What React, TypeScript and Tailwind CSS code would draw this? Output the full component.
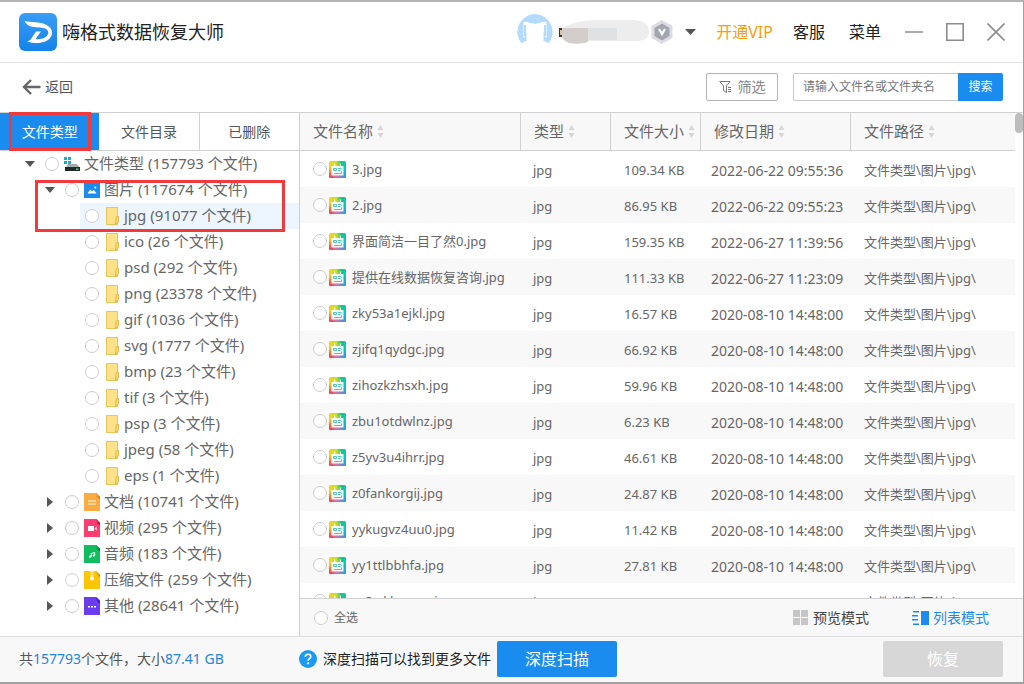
import { useState } from "react";
import type { ReactNode } from "react";

type FileKind = "drive" | "image" | "folder" | "doc" | "video" | "audio" | "zip" | "other";

interface TreeNode {
  name: string;
  count: number;
  kind: FileKind;
  level: number;
  open?: boolean;
}

const treeNodes: TreeNode[] = [
  { name: "文件类型", count: 157793, kind: "drive", level: 0, open: true },
  { name: "图片", count: 117674, kind: "image", level: 1, open: true },
  { name: "jpg", count: 91077, kind: "folder", level: 2 },
  { name: "ico", count: 26, kind: "folder", level: 2 },
  { name: "psd", count: 292, kind: "folder", level: 2 },
  { name: "png", count: 23378, kind: "folder", level: 2 },
  { name: "gif", count: 1036, kind: "folder", level: 2 },
  { name: "svg", count: 1777, kind: "folder", level: 2 },
  { name: "bmp", count: 23, kind: "folder", level: 2 },
  { name: "tif", count: 3, kind: "folder", level: 2 },
  { name: "psp", count: 3, kind: "folder", level: 2 },
  { name: "jpeg", count: 58, kind: "folder", level: 2 },
  { name: "eps", count: 1, kind: "folder", level: 2 },
  { name: "文档", count: 10741, kind: "doc", level: 1 },
  { name: "视频", count: 295, kind: "video", level: 1 },
  { name: "音频", count: 183, kind: "audio", level: 1 },
  { name: "压缩文件", count: 259, kind: "zip", level: 1 },
  { name: "其他", count: 28641, kind: "other", level: 1 },
];

const files = [
  { name: "3.jpg", size: "109.34 KB", date: "2022-06-22 09:55:36" },
  { name: "2.jpg", size: "86.95 KB", date: "2022-06-22 09:55:23" },
  { name: "界面简洁一目了然0.jpg", size: "159.35 KB", date: "2022-06-27 11:39:56" },
  { name: "提供在线数据恢复咨询.jpg", size: "111.33 KB", date: "2022-06-27 11:23:09" },
  { name: "zky53a1ejkl.jpg", size: "16.57 KB", date: "2020-08-10 14:48:00" },
  { name: "zjifq1qydgc.jpg", size: "66.92 KB", date: "2020-08-10 14:48:00" },
  { name: "zihozkzhsxh.jpg", size: "59.96 KB", date: "2020-08-10 14:48:00" },
  { name: "zbu1otdwlnz.jpg", size: "6.23 KB", date: "2020-08-10 14:48:00" },
  { name: "z5yv3u4ihrr.jpg", size: "46.61 KB", date: "2020-08-10 14:48:00" },
  { name: "z0fankorgij.jpg", size: "24.87 KB", date: "2020-08-10 14:48:00" },
  { name: "yykugvz4uu0.jpg", size: "11.42 KB", date: "2020-08-10 14:48:00" },
  { name: "yy1ttlbbhfa.jpg", size: "27.81 KB", date: "2020-08-10 14:48:00" },
  { name: "yx3wkhsumc.jpg", size: "18.06 KB", date: "2020-08-10 14:48:00" },
];

const columns = ["文件名称", "类型", "文件大小", "修改日期", "文件路径"];

const indent: Record<number, string> = {
  0: "pl-6",
  1: "pl-11",
  2: "pl-16",
};

function Circle({ id }: { id: string }) {
  return (
    <input
      id={id}
      type="checkbox"
      className="size-3.5 shrink-0 appearance-none rounded-full border border-[#cccccc] bg-white checked:bg-[#1a8cf0]"
    />
  );
}

function SheetIcon({ color, fold, children }: { color: string; fold: string; children: ReactNode }) {
  return (
    <svg width="16" height="18" viewBox="0 0 16 18">
      <path d="M0 0h12.5L16 3.5V18H0z" fill={color} />
      <path d="M12.5 0v3.5H16z" fill={fold} opacity="0.35" />
      <path d="M12.5 3.5H16v3z" fill={fold} />
      {children}
    </svg>
  );
}

function KindIcon({ kind }: { kind: FileKind }) {
  switch (kind) {
    case "drive":
      return (
        <svg width="16" height="16" viewBox="0 0 16 16">
          <path d="M0 1h3v3H0zM4 1h3v3H4zM0 5h3v3H0zM4 5h3v3H4z" fill="#1fa9c4" />
          <path d="M4 8h9l2 3H2z" fill="#a4adb0" />
          <path d="M1 11h15v4H1z" fill="#23282b" />
          <path d="M12 12.500h2.500V14H12z" fill="#36d67e" />
        </svg>
      );
    case "image":
      return (
        <svg width="16" height="16" viewBox="0 0 16 16">
          <path d="M0 0h16v16H0z" fill="#1a8cf0" />
          <path d="M3.500 11.500 6.200 7.500l2 1.800 1.600-1.500 2.900 3.700z" fill="#fff" />
          <circle cx="11.300" cy="5.500" r="1" fill="#fff" />
        </svg>
      );
    case "folder":
      return (
        <svg width="13" height="18" viewBox="0 0 13 18">
          <path d="M.5.5h11v17H.5z" fill="#fde28a" stroke="#e9c555" />
          <path d="M9.5 17.5 12.5 15V9.5h-1.7c-.8 0-.8 1-.8 2z" fill="#fbd96f" stroke="#dfb847" />
        </svg>
      );
    case "doc":
      return (
        <SheetIcon color="#fbab40" fold="#d07f12">
          <path d="M4 8h8M4 11h8" stroke="#fff" strokeWidth="1.2" />
        </SheetIcon>
      );
    case "video":
      return (
        <SheetIcon color="#fb3d6f" fold="#b80f3f">
          <path d="M4 7h6v5H4z" fill="#fff" />
          <path d="m10.5 9.5 2.2-2v4z" fill="#fff" />
        </SheetIcon>
      );
    case "audio":
      return (
        <SheetIcon color="#12bd5f" fold="#067a38">
          <path d="M7.2 11.500V8.500l3.500-1v3" fill="none" stroke="#fff" />
          <circle cx="6.200" cy="11.600" r="1.200" fill="#fff" />
          <circle cx="9.800" cy="10.600" r="1.100" fill="#fff" />
        </SheetIcon>
      );
    case "zip":
      return (
        <SheetIcon color="#fcc605" fold="#c99a00">
          <path d="M8 0v6" stroke="#fff" strokeWidth="3" strokeDasharray="1.5 .5" opacity="0.7" />
          <circle cx="8" cy="7.6" r="2" fill="#fff" />
        </SheetIcon>
      );
    default:
      return (
        <SheetIcon color="#6c3cf0" fold="#4016b5">
          <path d="M4 9h2v1.4H4zM7 9h2v1.4H7zM10 9h2v1.4h-2z" fill="#fff" />
        </SheetIcon>
      );
  }
}

function JpgIcon() {
  return (
    <svg width="17" height="17" viewBox="0 0 17 17" className="shrink-0">
      <defs>
        <linearGradient id="jpgTop" x1="0" y1="0" x2="1" y2="0">
          <stop offset="0" stopColor="#f6d51e" />
          <stop offset="0.45" stopColor="#c4dc28" />
          <stop offset="0.7" stopColor="#12c98b" />
          <stop offset="1" stopColor="#12c5b4" />
        </linearGradient>
        <linearGradient id="jpgBottom" x1="0" y1="0" x2="1" y2="0">
          <stop offset="0" stopColor="#ee2f44" />
          <stop offset="0.4" stopColor="#e86aa5" />
          <stop offset="1" stopColor="#1d9df0" />
        </linearGradient>
        <linearGradient id="jpgFade" x1="0" y1="0" x2="0" y2="1">
          <stop offset="0.35" stopColor="#000" />
          <stop offset="0.95" stopColor="#fff" />
        </linearGradient>
        <mask id="jpgMask">
          <path d="M0 0h17v17H0z" fill="url(#jpgFade)" />
        </mask>
      </defs>
      <rect width="17" height="17" rx="1.5" fill="url(#jpgTop)" />
      <rect width="17" height="17" rx="1.5" fill="url(#jpgBottom)" mask="url(#jpgMask)" />
      <path d="M2.500 5H5V2.500h1.300V5h4.400V2.500H12V5h2.500v9.500h-12z" fill="#fff" opacity="0.92" />
      <path d="M4.500 7.500h3v2h-3zM9 7.500h3.500M9 9.500h2.500M5 12.500h7.500v-2" fill="none" stroke="#3fbfb2" strokeWidth=".9" />
    </svg>
  );
}

function SortIcon() {
  return (
    <svg width="7" height="13" viewBox="0 0 7 13" className="shrink-0" fill="#d6d6d6">
      <path d="M3.5 0 6.500 5h-6zM3.5 13 .5 8h6z" />
    </svg>
  );
}

function TitleBar() {
  return (
    <header className="flex h-[61px] shrink-0 items-center border-b border-[#e2e2e2] pr-[18px] pl-[19px]">
      <svg width="38" height="38" viewBox="0 0 38 38">
        <defs>
          <linearGradient id="logoBg" x1="0" y1="0" x2="0" y2="1">
            <stop offset="0" stopColor="#3a9df6" />
            <stop offset="1" stopColor="#1583ea" />
          </linearGradient>
        </defs>
        <rect width="38" height="38" rx="6" fill="url(#logoBg)" />
        <path
          d="M5.500 8c7 1.200 15 .8 21 3.500 5 2.200 7.500 6 6.300 10.300-1.600 5.400-7.300 7.900-13.800 8.200-3.500.1-7-.3-11-1.500 1.500-.3 3-1.200 4-2.500L17 18.500h5L16.500 26c5.500.8 11-1 12.500-5 1.100-3-1-5.200-5-6-5-1-8.500-.5-12-1.500C9 12.500 7 11 5.500 8z"
          fill="#fff"
        />
      </svg>
      <h1 className="ml-[5px] text-lg text-[#222]">嗨格式数据恢复大师</h1>

      <div className="ml-auto flex items-center">
        <svg width="36" height="36" viewBox="0 0 36 36">
          <path
            d="M18 0a18 18 0 0 1 13.500 29.500c-1-1.500-3-1.500-5-2.500V17l1 5 2 2V8c-2 0-4-.8-5.500.5-3 1.500-9 1.500-12 0C10.500 7.200 8.500 8 6.500 8v16l2-2 1-5v10c-2 1-4 1-5 2.500A18 18 0 0 1 18 0z"
            fill="#b4dcfa"
          />
          <path d="M7 11h2v11H7zM27 11h2v11h-2z" fill="#b4dcfa" />
        </svg>
        <svg width="92" height="26" viewBox="0 0 92 26" className="ml-1.5">
          <path d="M0 9h3v9H0z" fill="#3a332c" />
          <path d="M1 11h2v5H1z" fill="#dcc0a0" />
          <path d="M3 9C12 4 22 2 34 1h40c11 0 16 5 16 12s-6 9-13 9H30c-4 2-12 3-18 2-5-1-9-4-9-8z" fill="#ededed" />
          <path d="M3 9h26v14c-6 2-13 2-19 1-5-2-7-5-7-8z" fill="#d3cecc" />
          <path d="M29 9h29v12H29z" fill="#e0e1e3" />
        </svg>
        <svg width="22" height="24" viewBox="0 0 22 24">
          <path d="M11 0l10.500 6v12L11 24 .5 18V6z" fill="#dddce2" />
          <path d="M11 3.500 18.500 8v8L11 20.500 3.500 16V8z" fill="#a5a4b1" />
          <path d="m8 9 3 5 3-5" fill="none" stroke="#fff" strokeWidth="2.200" />
        </svg>
        <button type="button" aria-label="账户" className="ml-3">
          <svg width="11" height="6" viewBox="0 0 11 6">
            <path d="M0 0h11L5.500 6z" fill="#555" />
          </svg>
        </button>
        <a href="#vip" className="ml-5 text-base text-[#f5a10c]">开通VIP</a>
        <a href="#service" className="ml-5 text-base text-[#222]">客服</a>
        <button type="button" className="ml-6 text-base text-[#222]">菜单</button>
        <div className="ml-6 flex items-center gap-[23px]">
          <button type="button" aria-label="最小化">
            <svg width="18" height="18" viewBox="0 0 18 18" stroke="#8c8c8c" strokeWidth="1.500">
              <path d="M0 9h18" />
            </svg>
          </button>
          <button type="button" aria-label="最大化">
            <svg width="18" height="18" viewBox="0 0 18 18" fill="none" stroke="#8c8c8c" strokeWidth="1.600">
              <path d="M.8.8h16.400v16.400H.8z" />
            </svg>
          </button>
          <button type="button" aria-label="关闭">
            <svg width="18" height="18" viewBox="0 0 18 18" stroke="#8c8c8c" strokeWidth="1.600">
              <path d="m.5.5 17 17M17.500.5l-17 17" />
            </svg>
          </button>
        </div>
      </div>
    </header>
  );
}

function Toolbar() {
  return (
    <div className="flex h-[50px] shrink-0 items-center border-b border-[#d0d0d0] pr-5 pb-0.5 pl-[22px]">
      <button type="button" className="flex items-center gap-1 text-sm text-[#555]">
        <svg width="19" height="16" viewBox="0 0 19 16" fill="none" stroke="#666" strokeWidth="2.400">
          <path d="M18.500 8H2M9 1 2 8l7 7" />
        </svg>
        返回
      </button>
      <button
        type="button"
        className="ml-auto flex h-7 w-[72px] items-center justify-center gap-1.5 rounded-xs border border-[#b4b4b4] text-sm text-[#888]"
      >
        <svg width="13" height="12" viewBox="0 0 13 12" fill="none" stroke="#777">
          <path d="M11 .5H.8L4.500 5v4.500l3 2V5L11 .5zM9 6.500h3M9 8.500h3M9 10.500h3" />
        </svg>
        筛选
      </button>
      <form className="ml-[15px] flex h-7" onSubmit={(e) => e.preventDefault()}>
        <input
          type="text"
          aria-label="搜索文件"
          placeholder="请输入文件名或文件夹名"
          className="w-[165px] rounded-l-xs border border-r-0 border-[#c8c8c8] px-[9px] text-xs text-[#555] outline-none placeholder:text-[#777]"
        />
        <button type="submit" className="w-[45px] rounded-r-xs bg-[#1a8cf0] text-xs text-white">
          搜索
        </button>
      </form>
    </div>
  );
}

function Sidebar() {
  const [active, setActive] = useState("jpg");

  return (
    <aside className="flex w-[300px] shrink-0 flex-col border-r border-[#d0d0d0]">
      <div className="flex h-[38px] shrink-0 border-b border-[#d0d0d0] text-sm text-[#555]">
        <button type="button" className="relative flex-1 bg-[#1a8cf0] text-white">
          文件类型
          <span className="absolute -inset-y-px right-2 left-[9px] border-3 border-[#f23a3c]" />
        </button>
        <button type="button" className="flex-1">文件目录</button>
        <button type="button" className="flex-1 border-l border-[#d0d0d0]">已删除</button>
      </div>

      <div className="relative min-h-0 flex-1 overflow-hidden">
        <ul className="text-[15px] text-[#666]">
          {treeNodes.map((node) => (
            <li key={node.name} className={`flex h-[26px] ${indent[node.level]}`}>
              <span className="flex w-3 shrink-0 items-center">
                {node.level < 2 && (
                  <button type="button" aria-label={node.name}>
                    <svg width="12" height="12" viewBox="0 0 12 12" fill="#555">
                      {node.open ? <path d="M1 3h10L6 9z" /> : <path d="M3 1v10l6-5z" />}
                    </svg>
                  </button>
                )}
              </span>
              <div
                className={`ml-1 flex flex-1 items-center pl-[5px] ${node.name === active ? "bg-[#edf6fe]" : ""}`}
                onClick={() => setActive(node.name)}
              >
                <Circle id={`node-${node.name}`} />
                <span className="mr-1 ml-[5px] flex w-4 justify-center">
                  <KindIcon kind={node.kind} />
                </span>
                <label htmlFor={`node-${node.name}`} className="pb-0.5 whitespace-nowrap">
                  {node.name} ({node.count} 个文件)
                </label>
              </div>
            </li>
          ))}
        </ul>
        <span className="pointer-events-none absolute top-[29px] right-3.5 left-[35px] h-[52px] border-3 border-[#f23a3c]" />
      </div>
    </aside>
  );
}

function FileTable() {
  return (
    <div className="flex min-h-0 flex-1">
      <div className="min-w-0 flex-1 overflow-hidden">
        <table className="w-full table-fixed border-separate border-spacing-0 text-left text-[13px] text-[#666]">
          <colgroup>
            <col className="w-[221px]" />
            <col className="w-[90px]" />
            <col className="w-[90px]" />
            <col className="w-[150px]" />
            <col />
          </colgroup>
          <thead>
            <tr className="h-[38px] bg-[#f8f8f8] text-[15px]">
              {columns.map((title, i) => (
                <th
                  key={title}
                  className={`border-b border-[#d0d0d0] p-0 pl-[13px] font-normal ${i < 4 ? "border-r" : ""}`}
                >
                  <span className="flex items-center gap-1 whitespace-nowrap">
                    {title}
                    <SortIcon />
                  </span>
                </th>
              ))}
            </tr>
          </thead>
          <tbody>
            {files.map((file) => (
              <tr key={file.name} className="h-9 even:bg-[#f8f8f8]">
                <td className="p-0 pl-[13px]">
                  <span className="flex items-center">
                    <Circle id={`file-${file.name}`} />
                    <span className="mr-1.5 ml-0.5">
                      <JpgIcon />
                    </span>
                    <label htmlFor={`file-${file.name}`} className="pt-0.5 whitespace-nowrap">
                      {file.name}
                    </label>
                  </span>
                </td>
                <td className="p-0 pt-1 pl-3">jpg</td>
                <td className="p-0 pt-1 pl-[13px]">{file.size}</td>
                <td className="p-0 pt-1 pl-2.5 text-sm whitespace-nowrap">{file.date}</td>
                <td className="p-0 pt-1 pl-[13px] whitespace-nowrap">文件类型\图片\jpg\</td>
              </tr>
            ))}
          </tbody>
        </table>
      </div>
      <div className="w-2 shrink-0">
        <div className="h-5 rounded-full bg-[#bdbdbd]" />
      </div>
    </div>
  );
}

function ViewBar() {
  return (
    <div className="flex h-[38px] shrink-0 items-center border-t border-[#d0d0d0] bg-[#f8f8f8] pr-[34px] pl-3.5">
      <Circle id="select-all" />
      <label htmlFor="select-all" className="ml-1.5 text-xs text-[#666]">全选</label>
      <button type="button" className="ml-auto flex items-center gap-[5px] text-sm text-[#444]">
        <svg width="15" height="15" viewBox="0 0 15 15" fill="#c6c6c6">
          <path d="M0 0h7v7H0zM8 0h7v7H8zM0 8h7v7H0zM8 8h7v7H8z" />
        </svg>
        预览模式
      </button>
      <button type="button" className="ml-[43px] flex items-center gap-1 text-sm text-[#1a8cf0]">
        <svg width="17" height="14" viewBox="0 0 17 14" fill="#1a8cf0">
          <path d="M1 0h6v1.500H1zM0 4h6v1.500H0zM0 8h6v1.500H0zM1 12.500h6V14H1zM9 0h8v14H9z" />
        </svg>
        列表模式
      </button>
    </div>
  );
}

function Footer() {
  return (
    <footer className="flex h-[46px] shrink-0 items-center border-t border-[#dcdcdc] bg-[#f8f8f8] pr-5 pb-0.5 pl-[19px] text-sm">
      <p className="w-[280px] whitespace-nowrap text-[#555]">
        共<span className="text-[#2486dc]">157793</span>个文件，大小
        <span className="text-[#2486dc]">87.41 GB</span>
      </p>
      <svg width="18" height="18" viewBox="0 0 18 18">
        <circle cx="9" cy="9" r="9" fill="#1a9af5" />
        <path d="M6.300 7c0-1.700 1.200-2.700 2.800-2.700s2.700 1 2.700 2.400c0 1.900-2.700 2-2.700 4" fill="none" stroke="#fff" strokeWidth="1.600" />
        <circle cx="9.100" cy="13.300" r="1.100" fill="#fff" />
      </svg>
      <p className="ml-1.5 whitespace-nowrap text-[#222]">深度扫描可以找到更多文件</p>
      <button type="button" className="ml-1.5 h-9 w-[120px] rounded-xs bg-[#1a8cf0] text-base text-white">
        深度扫描
      </button>
      <button type="button" className="ml-auto h-9 w-[120px] rounded-xs bg-[#d7d7d7] text-base text-white">
        恢复
      </button>
    </footer>
  );
}

export default function App() {
  return (
    <div className="flex h-screen flex-col border-t-2 border-r border-b-2 border-t-[#b4b4b4] border-r-[#a0a0a0] border-b-[#a0a0a0] bg-white font-['Noto_Sans','Noto_Sans_CJK_SC',sans-serif]">
      <TitleBar />
      <Toolbar />
      <main className="flex min-h-0 flex-1">
        <Sidebar />
        <section className="flex min-w-0 flex-1 flex-col">
          <FileTable />
          <ViewBar />
        </section>
      </main>
      <Footer />
    </div>
  );
}
